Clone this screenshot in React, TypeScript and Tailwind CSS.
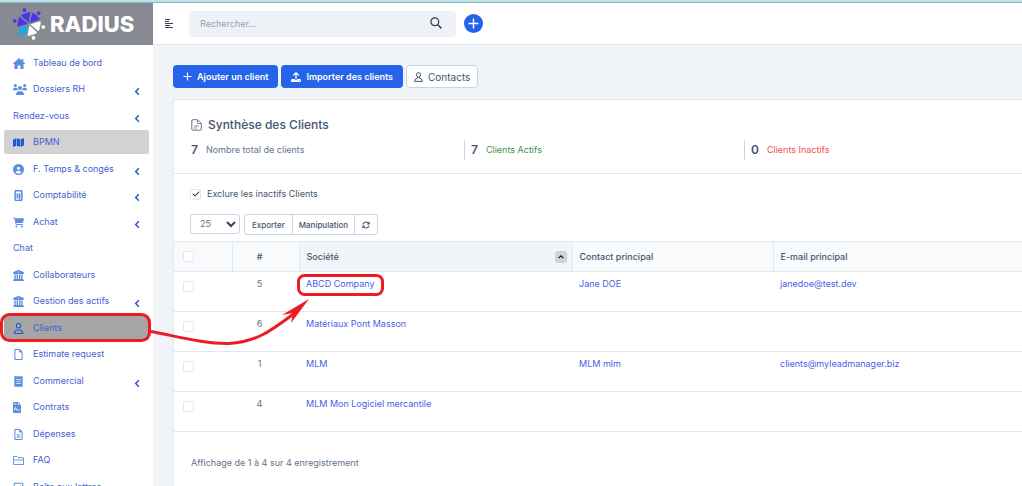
import React from 'react';
import {
  FaPeopleGroup,
  FaMap,
  FaCircleUser,
  FaCalculator,
  FaCartShopping,
  FaBuildingColumns,
  FaRegUser,
  FaRegFile,
  FaReceipt,
  FaRegFileLines,
  FaRegSquareCheck,
  FaUpload,
  FaCheck,
  FaArrowsRotate,
} from 'react-icons/fa6';

// ─── Data ───────────────────────────────────────
type NavItem = {
  label: string;
  icon?: React.ComponentType<{ className?: string }>;
  sub?: boolean;
  state?: 'hover' | 'active';
};

const NAV: NavItem[] = [
  { label: 'Tableau de bord', icon: HouseIcon },
  { label: 'Dossiers RH', icon: TeamIcon, sub: true },
  { label: 'Rendez-vous', sub: true },
  { label: 'BPMN', icon: FaMap, state: 'hover' },
  { label: 'F. Temps & congés', icon: FaCircleUser, sub: true },
  { label: 'Comptabilité', icon: FaCalculator, sub: true },
  { label: 'Achat', icon: FaCartShopping, sub: true },
  { label: 'Chat' },
  { label: 'Collaborateurs', icon: FaBuildingColumns },
  { label: 'Gestion des actifs', icon: FaBuildingColumns, sub: true },
  { label: 'Clients', icon: FaRegUser, state: 'active' },
  { label: 'Estimate request', icon: FaRegFile },
  { label: 'Commercial', icon: FaReceipt, sub: true },
  { label: 'Contrats', icon: ContractIcon },
  { label: 'Dépenses', icon: FaRegFileLines },
  { label: 'FAQ', icon: FolderIcon },
  { label: 'Boîte aux lettres', icon: FaRegSquareCheck },
];

const CLIENTS = [
  { id: 5, company: 'ABCD Company', contact: 'Jane DOE', email: 'janedoe@test.dev' },
  { id: 6, company: 'Matériaux Pont Masson', contact: '', email: '' },
  { id: 1, company: 'MLM', contact: 'MLM mlm', email: 'clients@myleadmanager.biz' },
  { id: 4, company: 'MLM Mon Logiciel mercantile', contact: '', email: '' },
];

const ITEM_BG = {
  hover: 'bg-[#d2d2d2]',
  active: 'bg-[#a5a5a5]',
};

// ─── Icons ──────────────────────────────────────

function Stroke({ className, d }: { className: string; d: string }) {
  return (
    <svg viewBox="0 0 10 10" className={className} fill="none" stroke="currentColor" aria-hidden="true">
      <path d={d} />
    </svg>
  );
}

function HouseIcon({ className }: { className?: string }) {
  return (
    <svg viewBox="0 0 12 11" className={className} fill="currentColor" aria-hidden="true">
      <path d="M6 0 0 5.400V6h1.500v5h3.200V7.500h2.600V11h3.200V6H12v-.600L10.300 3.800V1H8.800v1.500Z" />
    </svg>
  );
}

function TeamIcon({ className }: { className?: string }) {
  return (
    <svg viewBox="0 0 14 11" className={className} fill="currentColor" aria-hidden="true">
      <circle cx="2.300" cy="1.500" r="1.500" />
      <circle cx="11.700" cy="1.500" r="1.500" />
      <circle cx="7" cy="4" r="2" />
      <path d="M0 5.800C0 4.500.8 3.700 2 3.700h1.200c.4 0 .8.1 1.100.3-.1.900.200 1.700.8 2.200H.4ZM14 5.800c0-1.300-.8-2.100-2-2.100h-1.200c-.4 0-.8.1-1.100.3.1.900-.200 1.700-.8 2.200h4.700ZM3 11c0-2.300 1.200-3.800 3-3.800h2c1.800 0 3 1.500 3 3.800Z" />
    </svg>
  );
}

function ContractIcon({ className }: { className?: string }) {
  return (
    <svg viewBox="0 0 8 11" className={className} aria-hidden="true">
      <path d="M1 0h4v3h3v7a1 1 0 0 1-1 1H1a1 1 0 0 1-1-1V1a1 1 0 0 1 1-1Z" fill="currentColor" />
      <path d="M5.600 0 8 2.400H5.600Z" fill="currentColor" />
      <path d="M1 2h2.500M1.200 8 2.500 5.500l1 2.500H6.500" fill="none" stroke="#fff" strokeWidth=".9" />
    </svg>
  );
}

function FolderIcon({ className }: { className?: string }) {
  return (
    <svg viewBox="0 0 11 11" className={className} fill="none" stroke="currentColor" aria-hidden="true">
      <path d="M.5 9.500v-8h3.500l1 1.200h5.500v6.800ZM.5 5h10" strokeWidth=".9" />
    </svg>
  );
}

function DocIcon({ className }: { className?: string }) {
  return (
    <svg viewBox="0 0 11 12" className={className} fill="none" stroke="currentColor" aria-hidden="true">
      <path d="M2 .7h4.500l3.800 3.800V10a1.200 1.200 0 0 1-1.200 1.200H2A1.200 1.200 0 0 1 .8 10V1.900A1.200 1.200 0 0 1 2 .7Z" />
      <path d="M6.500.7v3.800h3.800M3 7h5M3 9h3" strokeWidth=".8" />
    </svg>
  );
}

function PersonIcon({ className }: { className?: string }) {
  return (
    <svg viewBox="0 0 9 10" className={className} fill="none" stroke="currentColor" aria-hidden="true">
      <ellipse cx="4.500" cy="2.900" rx="2" ry="2.300" />
      <path d="M3.500 5v1.200L1 7.500.6 9.400h7.800L8 7.500 5.500 6.200V5" />
    </svg>
  );
}

// Six wedges around a hub, each with a small square beyond its rim
const WEDGES = [
  { angle: -168, fill: '#4a35e8' },
  { angle: -108, fill: '#4a35e8' },
  { angle: -48, fill: '#4a35e8' },
  { angle: 12, fill: '#ffffff' },
  { angle: 72, fill: '#ffffff' },
  { angle: 132, fill: '#19a7e6' },
];

function LogoMark() {
  return (
    <svg viewBox="-17 -17 34 34" className="size-[34px] shrink-0" aria-hidden="true">
      {WEDGES.map(({ angle, fill }) => (
        <g key={angle} transform={`rotate(${angle})`} fill={fill}>
          <path d="M1.200 0 10.600-5.100Q12.200-2.500 11-.8L12 0 11 .8Q12.200 2.500 10.600 5.100Z" />
          <rect x="13" y="-1.600" width="3.200" height="3.200" />
        </g>
      ))}
    </svg>
  );
}

function TickBox({ label }: { label: string }) {
  return (
    <input
      type="checkbox"
      aria-label={label}
      className="block size-[11px] appearance-none rounded-[2px] border border-slate-200 bg-white"
    />
  );
}

// ─── Layout blocks ──────────────────────────────

function Sidebar() {
  return (
    <aside className="flex w-[153px] shrink-0 flex-col bg-white">
      <div className="flex h-[42px] shrink-0 items-center gap-1 bg-[#878a93] pl-3">
        <LogoMark />
        <span className="text-[22px] font-extrabold text-white">RADIUS</span>
      </div>
      <nav className="px-1 pt-[6px]">
        <ul>
          {NAV.map(({ label, icon: Icon, sub, state }) => (
            <li key={label} className="mb-[2px] even:mb-[3px]">
              <a
                href="#"
                className={`flex h-6 items-center rounded-[2px] pr-[7px] pl-[9px] ${state ? ITEM_BG[state] : ''}`}
              >
                {Icon && (
                  <span className={`w-5 shrink-0 ${state ? 'text-[#1d56d8]' : 'text-[#5b8de0]'}`}>
                    <Icon className="h-[11px] w-auto" />
                  </span>
                )}
                <span className="grow whitespace-nowrap text-[#4462d2]">{label}</span>
                {sub && <Stroke className="mt-1 size-[9px] stroke-[1.500] text-[#1d4fd0]" d="M6.500 1.500 3 5l3.500 3.500" />}
              </a>
            </li>
          ))}
        </ul>
      </nav>
    </aside>
  );
}

function TopBar() {
  return (
    <header className="flex h-[42px] shrink-0 items-center border-b border-slate-200 bg-white pl-3">
      <button type="button" aria-label="Menu" className="mr-4 text-slate-700">
        <svg viewBox="0 0 8 9" className="h-[9px] w-2" stroke="currentColor" aria-hidden="true">
          <path d="M0 .5h5M0 2.500h4M0 4.500h8M0 6.500h5M0 8.500h8" />
        </svg>
      </button>
      <label className="flex h-[26px] w-[267px] items-center rounded bg-[#eef2f6] pr-[14px] pl-[11px]">
        <input
          type="search"
          aria-label="Rechercher"
          placeholder="Rechercher..."
          className="min-w-0 grow bg-transparent outline-none placeholder:text-slate-400"
        />
        <svg viewBox="0 0 12 12" className="mb-[2px] size-3 text-slate-700" fill="none" stroke="currentColor" aria-hidden="true">
          <circle cx="4.800" cy="4.800" r="3.900" strokeWidth="1.300" />
          <path d="m7.800 7.800 3.600 3.600" strokeWidth="1.500" />
        </svg>
      </label>
      <button
        type="button"
        aria-label="Ajouter"
        className="ml-2 flex size-[19px] items-center justify-center rounded-full bg-[#2563eb] text-white"
      >
        <Stroke className="size-[11px] stroke-[1.300]" d="M5 .5v9M.5 5h9" />
      </button>
    </header>
  );
}

function Actions() {
  return (
    <div className="flex gap-[3px] font-semibold">
      <button type="button" className="flex h-[23px] items-center gap-[5px] rounded bg-[#2563eb] px-[10px] text-white">
        <Stroke className="size-[9px] stroke-[1.300]" d="M5 .5v9M.5 5h9" />
        Ajouter un client
      </button>
      <button type="button" className="flex h-[23px] items-center gap-[5px] rounded bg-[#2563eb] px-[10px] text-white">
        <FaUpload className="size-[10px]" />
        Importer des clients
      </button>
      <button
        type="button"
        className="flex h-[23px] items-center gap-[5px] rounded border border-slate-300 bg-white px-[7px] text-[10px] font-normal text-slate-600"
      >
        <PersonIcon className="h-[10px] w-[9px]" />
        Contacts
      </button>
    </div>
  );
}

function Summary() {
  return (
    <section className="border-b border-slate-200 px-[17px] pt-[17px] pb-[13px]">
      <h4 className="flex h-4 items-center gap-[6px] text-xs font-medium text-slate-600">
        <DocIcon className="h-3 w-[11px] text-slate-500" />
        Synthèse des Clients
      </h4>
      <div className="mt-[7px] flex">
        <p className="flex h-5 w-[273px] items-center gap-2 text-slate-500">
          <b className="text-xs font-semibold text-slate-600">7</b> Nombre total de clients
        </p>
        <p className="flex h-5 w-[280px] items-center gap-2 border-l border-slate-300 pl-[6px] text-[#3f9150]">
          <b className="text-xs font-semibold text-slate-600">7</b> Clients Actifs
        </p>
        <p className="flex h-5 items-center gap-2 border-l border-slate-300 pl-[6px] text-[#f04f56]">
          <b className="text-xs font-semibold text-slate-600">0</b> Clients Inactifs
        </p>
      </div>
    </section>
  );
}

function Toolbar() {
  return (
    <section className="px-4 pt-[13px] pb-[6px]">
      <label className="flex h-[14px] items-center gap-[6px] text-slate-600">
        <span className="relative">
          <input
            type="checkbox"
            defaultChecked
            className="peer block size-[11px] appearance-none rounded-[2px] border border-slate-200"
          />
          <FaCheck className="pointer-events-none absolute inset-0 m-auto hidden size-2 text-slate-800 peer-checked:block" />
        </span>
        Exclure les inactifs Clients
      </label>
      <div className="mt-[13px] flex gap-1">
        <span className="relative">
          <select
            aria-label="Lignes par page"
            defaultValue="25"
            className="h-5 w-[50px] appearance-none rounded-[3px] border border-slate-300 bg-white pl-[9px] text-slate-500"
          >
            <option>10</option>
            <option>25</option>
            <option>50</option>
          </select>
          <Stroke
            className="pointer-events-none absolute top-[5px] right-1 size-[10px] stroke-2 text-slate-700"
            d="M1 3l4 4 4-4"
          />
        </span>
        <div className="flex h-[21px] divide-x divide-slate-300 rounded-[3px] border border-slate-300 text-[8px] font-medium text-slate-600">
          <button type="button" className="px-[7px]">Exporter</button>
          <button type="button" className="px-[6px]">Manipulation</button>
          <button type="button" aria-label="Actualiser" className="px-[7px]">
            <FaArrowsRotate className="size-2" />
          </button>
        </div>
      </div>
    </section>
  );
}

function ClientsTable() {
  return (
    <table className="w-full table-fixed border-collapse text-left">
      <colgroup>
        <col className="w-[58px]" />
        <col className="w-[67px]" />
        <col className="w-[273px]" />
        <col className="w-[201px]" />
        <col />
      </colgroup>
      <thead>
        <tr className="h-[30px] border-y border-slate-200 bg-slate-50 text-slate-600 [&>th]:font-medium">
          <th className="border-r border-slate-200 pl-[9px]">
            <TickBox label="Tout sélectionner" />
          </th>
          <th className="border-r border-slate-200 pr-3 text-center">#</th>
          <th className="border-r border-slate-200 bg-slate-100 pr-[5px] pl-[7px]">
            <span className="flex items-center justify-between">
              Société
              <span className="flex size-3 items-center justify-center rounded-[3px] bg-slate-300">
                <Stroke className="size-2 stroke-[1.500] text-slate-900" d="M2 6.500 5 3.500l3 3" />
              </span>
            </span>
          </th>
          <th className="border-r border-slate-200 pl-[7px]">Contact principal</th>
          <th className="pl-[7px]">E-mail principal</th>
        </tr>
      </thead>
      <tbody>
        {CLIENTS.map((c) => (
          <tr key={c.id} className="h-10 border-b border-slate-200 align-top text-[#4c60e6] [&>td]:pt-[6px]">
            <td className="pl-[9px]">
              <div className="pt-[3px]">
                <TickBox label={`Sélectionner ${c.company}`} />
              </div>
            </td>
            <td className="pr-3 text-center text-slate-500">{c.id}</td>
            <td className="pl-[7px]">
              <a href="#">{c.company}</a>
            </td>
            <td className="pl-[7px]">{c.contact && <a href="#">{c.contact}</a>}</td>
            <td className="pl-[7px]">{c.email && <a href={`mailto:${c.email}`}>{c.email}</a>}</td>
          </tr>
        ))}
      </tbody>
    </table>
  );
}

// Red marks drawn over the page: two boxes joined by an arrow
function Annotation() {
  return (
    <svg
      viewBox="0 0 400 360"
      className="pointer-events-none absolute top-0 left-0 h-[360px] w-[400px]"
      fill="none"
      stroke="#ed1c24"
      strokeWidth="3"
      aria-hidden="true"
    >
      <rect x="1.500" y="314.500" width="148" height="26" rx="8" />
      <rect x="298.500" y="275.500" width="84" height="19" rx="6" />
      <path d="M151 331.500C180 337 205 344 229 343.500C257 342 272 330 296 312" />
      <path d="M309 299 282 315 293 313 291 323Z" fill="#ed1c24" stroke="none" />
    </svg>
  );
}

export default function App() {
  return (
    <div className="relative flex h-screen flex-col overflow-hidden bg-[#f0f3f8] font-['Inter',sans-serif] text-[9px] leading-3">
      <div className="h-[3px] shrink-0 border-b border-[#8fb5ba] bg-[#b9e3e6]" />
      <div className="flex min-h-0 grow">
        <Sidebar />
        <div className="flex min-w-0 grow flex-col">
          <TopBar />
          <main className="flex min-h-0 grow flex-col pt-5 pl-5">
            <Actions />
            <div className="mt-[11px] grow rounded-tl border-t border-l border-slate-200 bg-white">
              <Summary />
              <Toolbar />
              <ClientsTable />
              <p className="px-[17px] pt-[25px] text-slate-500">Affichage de 1 à 4 sur 4 enregistrement</p>
            </div>
          </main>
        </div>
      </div>
      <Annotation />
    </div>
  );
}
